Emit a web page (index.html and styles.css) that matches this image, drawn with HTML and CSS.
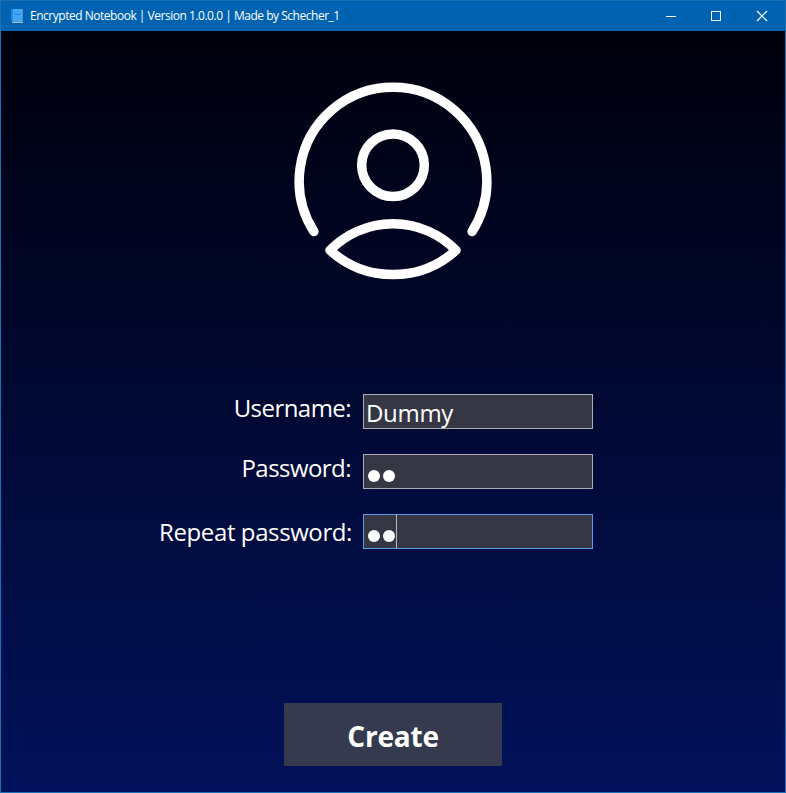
FILE: index.html
```html
<!DOCTYPE html>
<html lang="en">
<head>
<meta charset="utf-8">
<title>Encrypted Notebook</title>
<link rel="stylesheet" href="styles.css">
</head>
<body>
<div class="window">
  <header class="titlebar">
    <svg class="app-icon" width="12" height="14" viewBox="0 0 12 14" shape-rendering="crispEdges">
      <rect width="12" height="14" fill="#42a5f5"/>
      <rect width="2" height="13" fill="#1e88e5"/>
      <rect x="11" width="1" height="13" fill="#668fae"/>
      <rect y="13" width="1" height="1" fill="#243f5b"/>
      <rect x="1" y="13" width="11" height="1" fill="#a9b9c5"/>
      <path d="M3 4h1v1h5V4h1v1H9v1H4V5H3z" fill="#1e88e5"/>
    </svg>
    <span class="title">Encrypted Notebook | Version 1.0.0.0 | Made by Schecher_1</span>
    <div class="controls">
      <svg class="minimize" width="10" height="10" viewBox="0 0 10 10"><path d="M0 5.5h10" stroke="#fff"/></svg>
      <svg width="10" height="10" viewBox="0 0 10 10"><rect x=".5" y=".5" width="9" height="9" fill="none" stroke="#fff"/></svg>
      <svg width="10" height="10" viewBox="0 0 10 10"><path d="M0 0l10 10M10 0L0 10" stroke="#fff" stroke-width="1.2"/></svg>
    </div>
  </header>
  <main class="content">
    <svg class="avatar" width="200" height="200" viewBox="0 0 200 200" fill="none" stroke="#fff" stroke-width="9.5" stroke-linecap="round" stroke-linejoin="round">
      <path d="M20.9 150.5A93.8 93.8 0 1 1 179.1 150.5"/>
      <circle cx="100" cy="84.3" r="31.3"/>
      <path d="M37 169.3A88 88 0 0 1 163 169.3A93.8 93.8 0 0 1 37 169.3Z"/>
    </svg>
    <div class="form">
      <div class="row">
        <span class="label username">Username:</span>
        <div class="field"><span class="value">Dummy</span></div>
      </div>
      <div class="row">
        <span class="label password">Password:</span>
        <div class="field secret"><i class="dot"></i><i class="dot"></i></div>
      </div>
      <div class="row">
        <span class="label repeat">Repeat password:</span>
        <div class="field secret focused"><i class="dot"></i><i class="dot"></i><i class="caret"></i></div>
      </div>
    </div>
    <button class="create" type="button">Create</button>
  </main>
</div>
</body>
</html>
```
FILE: styles.css
```css
* { box-sizing: border-box; }
body { margin: 0; font-family: "Open Sans", "Noto Sans", sans-serif; color: #fff; }
.window {
  width: 786px;
  height: 793px;
  display: flex;
  flex-direction: column;
  border: 1px solid #1a6fb5;
  background: linear-gradient(#00000c, #02125b) 0 30px / 100% 762px no-repeat;
  overflow: hidden;
}
.titlebar {
  height: 30px;
  flex: none;
  display: flex;
  align-items: center;
  background: #0063b1;
  padding-left: 10px;
}
.app-icon { flex: none; margin-top: -1px; }
.title { margin-left: 7px; font-size: 12px; line-height: 16px; letter-spacing: -0.48px; white-space: nowrap; }
.controls { margin-left: auto; display: flex; gap: 36px; padding-right: 18px; margin-top: -1px; }
.controls svg { display: block; overflow: visible; }
.controls .minimize { margin-right: -1px; }
.content { flex: 1; display: flex; flex-direction: column; align-items: center; }
.avatar { flex: none; margin-top: 50px; }
.form { align-self: flex-start; margin: 113px 0 0 151px; display: flex; flex-direction: column; gap: 25px; }
.row { display: grid; grid-template-columns: 200px 230px; column-gap: 11px; height: 35px; }
.label { justify-self: end; font-size: 24px; line-height: 28px; white-space: nowrap; letter-spacing: -0.6px; }
.username, .password { margin-right: 1px; letter-spacing: -0.55px; }
.repeat { margin-top: 4px; letter-spacing: -0.4px; }
.field {
  display: flex;
  height: 35px;
  padding-left: 2px;
  border: 1px solid #abadb3;
  background: #353744;
}
.value { font-size: 24px; line-height: 36px; height: 33px; letter-spacing: -0.3px; }
.secret { padding-left: 4px; gap: 3px; }
.focused { border-color: #569de5; }
.dot { width: 12px; height: 12px; margin-top: 14.5px; border-radius: 50%; background: #fff; }
.caret { width: 1px; height: 33px; margin-left: -2px; background: #b8b9be; }
.create {
  width: 218px;
  height: 63px;
  margin-top: 154px;
  padding: 3px 0 0;
  border: 0;
  background: #353a4e;
  color: #fff;
  font: 700 28px/58px "Open Sans", "Noto Sans", sans-serif;
  letter-spacing: -0.2px;
}
```
